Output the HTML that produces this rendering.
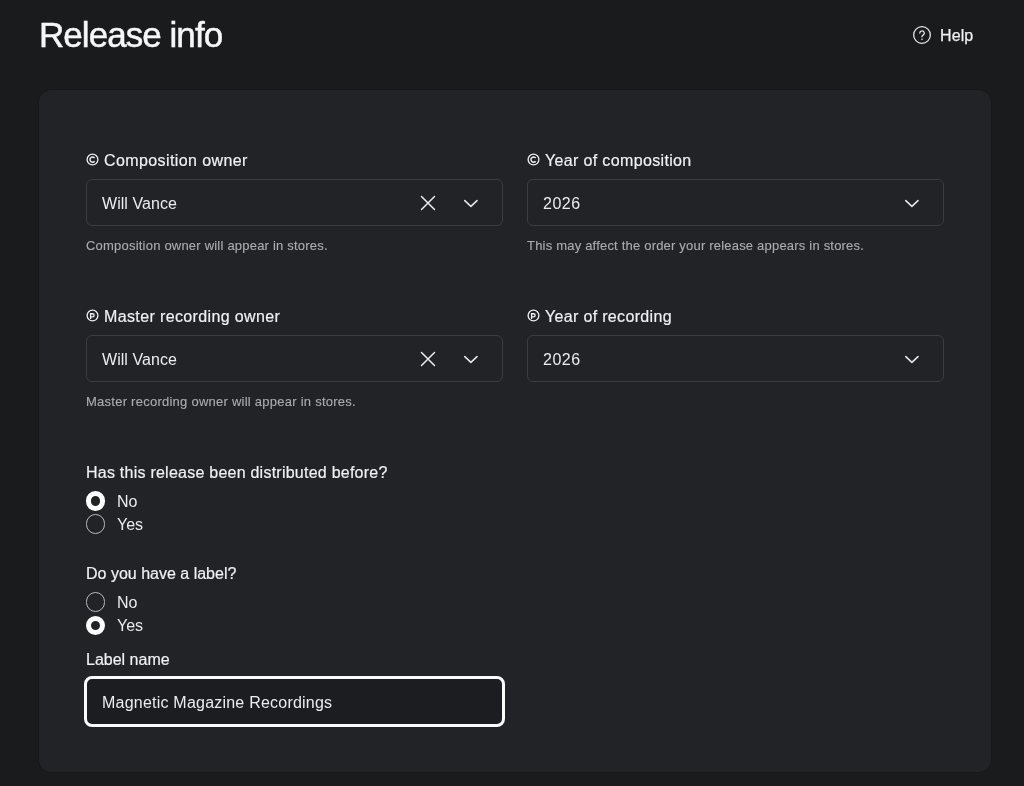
<!DOCTYPE html>
<html><head><meta charset="utf-8">
<style>
*{box-sizing:border-box;margin:0;padding:0}
html,body{width:1024px;height:786px;overflow:hidden;background:#1a1b1d;font-family:"Liberation Sans",sans-serif;color:#f2f2f3}
.abs{position:absolute}
.t{position:absolute;white-space:nowrap;line-height:1;will-change:transform}
#title{left:38.8px;top:17px;font-size:35px;letter-spacing:-0.95px;color:#f7f7f7;-webkit-text-stroke:0.5px #f7f7f7}
#help{left:940.3px;top:27.6px;font-size:16px;letter-spacing:0.1px;color:#f0f0f2;-webkit-text-stroke:0.25px #f0f0f2}
#helpicon{left:912.2px;top:25.2px;width:20px;height:20px}
#card{left:38.5px;top:89.5px;width:952.5px;height:682.5px;background:#222327;border-radius:12px;box-shadow:0 0 0 0.5px rgba(0,0,0,0.25)}
.lbl{font-size:16px;color:#f0f0f2;-webkit-text-stroke:0.2px #f0f0f2}
.sel{position:absolute;width:417px;height:47px;border:1px solid #3c3d42;border-radius:6px;background:#222327}
.val{font-size:16px;color:#ececee}
.hint{font-size:13px;color:#abacb0;-webkit-text-stroke:0.12px #abacb0}
.radio{position:absolute;width:19.6px;height:19.6px;border-radius:50%}
.on{border:5.1px solid #fff}
.off{border:1.6px solid #b9babd}
#inp{left:84px;top:676px;width:421px;height:51px;border:3px solid #fafafa;border-radius:8px;background:#1c1d20}
.sym{position:absolute;width:12px;height:12px}
</style></head>
<body>
<div id="title" class="t">Release info</div>
<svg id="helpicon" class="abs" viewBox="0 0 20 20"><circle cx="10" cy="10" r="8.35" fill="none" stroke="#e6e6e8" stroke-width="1.3"/><path d="M7.8 8.1a2.25 2.25 0 1 1 3.3 2c-.65.35-1.1.75-1.1 1.4v.35" fill="none" stroke="#e6e6e8" stroke-width="1.35" stroke-linecap="round"/><circle cx="10" cy="14.2" r=".8" fill="#e6e6e8"/></svg>
<div id="help" class="t">Help</div>
<div id="card" class="abs"></div>

<!-- row 1 -->
<svg class="sym" style="left:86px;top:153px;width:13px;height:13px" viewBox="0 0 13 13"><circle cx="6.5" cy="6.55" r="5.4" fill="none" stroke="#f0f0f2" stroke-width="1.3"/><path d="M8.6 5.0A2.6 2.6 0 1 0 8.6 8.2" fill="none" stroke="#f0f0f2" stroke-width="1.45"/></svg>
<div class="t lbl" style="left:103.5px;top:153px;letter-spacing:0.4px">Composition owner</div>
<div class="sel" style="left:86px;top:179px"></div>
<div class="t val" style="left:102.4px;top:196px;letter-spacing:0.05px">Will Vance</div>
<svg class="abs" style="left:420px;top:195px" width="16" height="16" viewBox="0 0 16 16"><path d="M1.5 1.5L14.5 14.5M14.5 1.5L1.5 14.5" stroke="#ececee" stroke-width="1.5" stroke-linecap="round"/></svg>
<svg class="abs" style="left:463px;top:198px" width="16" height="10" viewBox="0 0 16 10"><path d="M1.8 2.6L7.9 8.3L14 2.6" fill="none" stroke="#e6e6e8" stroke-width="1.6" stroke-linecap="round" stroke-linejoin="round"/></svg>
<div class="t hint" style="left:86px;top:239px;letter-spacing:0.21px">Composition owner will appear in stores.</div>

<svg class="sym" style="left:527px;top:153px;width:13px;height:13px" viewBox="0 0 13 13"><circle cx="6.5" cy="6.55" r="5.4" fill="none" stroke="#f0f0f2" stroke-width="1.3"/><path d="M8.6 5.0A2.6 2.6 0 1 0 8.6 8.2" fill="none" stroke="#f0f0f2" stroke-width="1.45"/></svg>
<div class="t lbl" style="left:545px;top:153px;letter-spacing:0.35px">Year of composition</div>
<div class="sel" style="left:527px;top:179px"></div>
<div class="t val" style="left:543px;top:196px;letter-spacing:0.5px">2026</div>
<svg class="abs" style="left:904px;top:198px" width="16" height="10" viewBox="0 0 16 10"><path d="M1.8 2.6L7.9 8.3L14 2.6" fill="none" stroke="#e6e6e8" stroke-width="1.6" stroke-linecap="round" stroke-linejoin="round"/></svg>
<div class="t hint" style="left:527px;top:239px;letter-spacing:0.2px">This may affect the order your release appears in stores.</div>

<!-- row 2 -->
<svg class="sym" style="left:86px;top:309px;width:13px;height:13px" viewBox="0 0 13 13"><circle cx="6.5" cy="6.55" r="5.4" fill="none" stroke="#f0f0f2" stroke-width="1.3"/><path d="M4.6 9.9V4.7H6.5A1.6 1.6 0 0 1 6.5 7.9H4.6" fill="none" stroke="#f0f0f2" stroke-width="1.35"/></svg>
<div class="t lbl" style="left:104px;top:309px;letter-spacing:0.37px">Master recording owner</div>
<div class="sel" style="left:86px;top:335px"></div>
<div class="t val" style="left:102.4px;top:352px;letter-spacing:0.05px">Will Vance</div>
<svg class="abs" style="left:420px;top:351px" width="16" height="16" viewBox="0 0 16 16"><path d="M1.5 1.5L14.5 14.5M14.5 1.5L1.5 14.5" stroke="#ececee" stroke-width="1.5" stroke-linecap="round"/></svg>
<svg class="abs" style="left:463px;top:354px" width="16" height="10" viewBox="0 0 16 10"><path d="M1.8 2.6L7.9 8.3L14 2.6" fill="none" stroke="#e6e6e8" stroke-width="1.6" stroke-linecap="round" stroke-linejoin="round"/></svg>
<div class="t hint" style="left:86px;top:395px;letter-spacing:0.25px">Master recording owner will appear in stores.</div>

<svg class="sym" style="left:527px;top:309px;width:13px;height:13px" viewBox="0 0 13 13"><circle cx="6.5" cy="6.55" r="5.4" fill="none" stroke="#f0f0f2" stroke-width="1.3"/><path d="M4.6 9.9V4.7H6.5A1.6 1.6 0 0 1 6.5 7.9H4.6" fill="none" stroke="#f0f0f2" stroke-width="1.35"/></svg>
<div class="t lbl" style="left:545px;top:309px;letter-spacing:0.33px">Year of recording</div>
<div class="sel" style="left:527px;top:335px"></div>
<div class="t val" style="left:543px;top:352px;letter-spacing:0.5px">2026</div>
<svg class="abs" style="left:904px;top:354px" width="16" height="10" viewBox="0 0 16 10"><path d="M1.8 2.6L7.9 8.3L14 2.6" fill="none" stroke="#e6e6e8" stroke-width="1.6" stroke-linecap="round" stroke-linejoin="round"/></svg>

<!-- radios -->
<div class="t lbl" style="left:86px;top:465px;letter-spacing:0.24px">Has this release been distributed before?</div>
<div class="radio on" style="left:85.7px;top:491px"></div>
<div class="t val" style="left:117px;top:494px">No</div>
<div class="radio off" style="left:85.7px;top:514px"></div>
<div class="t val" style="left:117px;top:517px">Yes</div>

<div class="t lbl" style="left:86px;top:566px;letter-spacing:0px">Do you have a label?</div>
<div class="radio off" style="left:85.7px;top:592px"></div>
<div class="t val" style="left:117px;top:595px">No</div>
<div class="radio on" style="left:85.7px;top:615.8px"></div>
<div class="t val" style="left:117px;top:618px">Yes</div>

<div class="t lbl" style="left:86px;top:652px;letter-spacing:0px">Label name</div>
<div id="inp" class="abs"></div>
<div class="t val" style="left:102.4px;top:695px;letter-spacing:0.22px">Magnetic Magazine Recordings</div>
</body></html>
